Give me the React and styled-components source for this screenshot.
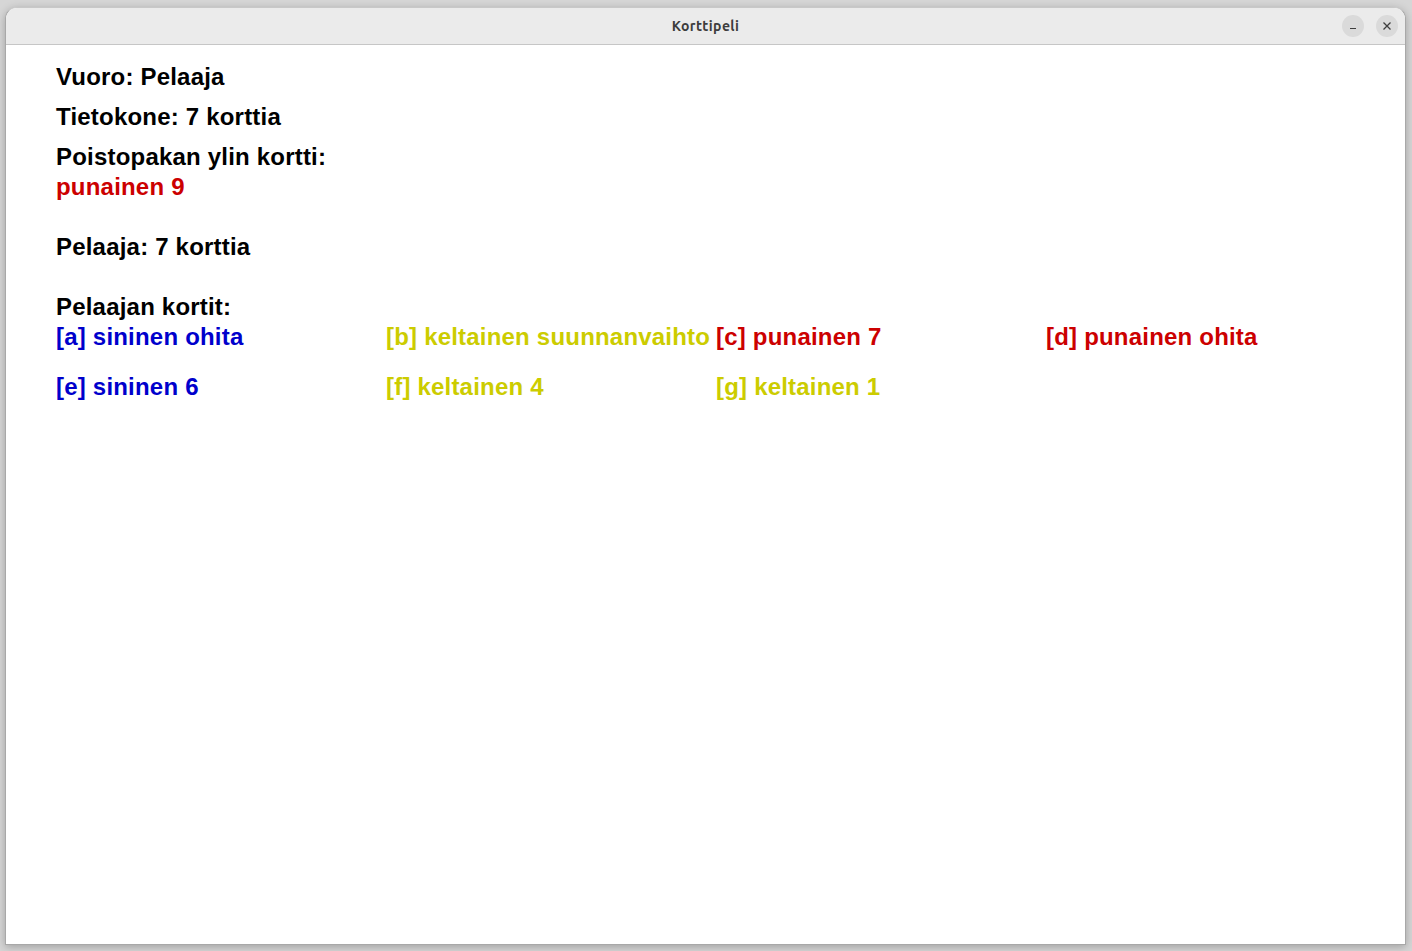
import React from "react";
import styled, { createGlobalStyle } from "styled-components";

const GlobalStyle = createGlobalStyle`
  html, body {
    margin: 0;
    padding: 0;
    background: #d6d6d6;
  }
  #root {
    height: 951px;
    padding: 7px 6px 6px 5px;
    box-sizing: border-box;
  }
`;

const Window = styled.div`
  height: 938px;
  display: flex;
  flex-direction: column;
  background: #ffffff;
  border: 1px solid #a8a8a8;
  border-top-color: #c8c8c8;
  border-radius: 12px 12px 0 0;
  box-shadow: 0 2px 8px rgba(0, 0, 0, 0.25);
  box-sizing: border-box;
  overflow: hidden;
`;

const TitleBar = styled.div`
  height: 36px;
  flex: none;
  display: grid;
  grid-template-columns: 1fr auto 1fr;
  align-items: center;
  background: #ebebeb;
  border-bottom: 1px solid #c6c6c6;
`;

const Title = styled.div`
  grid-column: 2;
  font-family: "Ubuntu", "Noto Sans", "DejaVu Sans", sans-serif;
  font-weight: 700;
  font-size: 14px;
  letter-spacing: 0.4px;
  color: #3d3d3d;
`;

const Controls = styled.div`
  grid-column: 3;
  justify-self: end;
  display: flex;
  gap: 12px;
  padding-right: 7px;
`;

const ControlButton = styled.div`
  width: 22px;
  height: 22px;
  border-radius: 50%;
  background: #dadada;
  display: flex;
  align-items: center;
  justify-content: center;
`;

const Content = styled.div`
  flex: 1;
  padding: 17px 50px 0 50px;
  font-family: "Liberation Sans", Arial, sans-serif;
  font-weight: 700;
  font-size: 24px;
  letter-spacing: 0.2px;
`;

const Line = styled.div`
  line-height: 30px;
  height: 30px;
  white-space: nowrap;
  color: ${({ $color }) => $color || "#000000"};
  margin-top: ${({ $gap }) => $gap || 0}px;
`;

const CardGrid = styled.div`
  display: grid;
  grid-template-columns: repeat(4, 330px);
  row-gap: 20px;
`;

const COLORS = {
  sininen: "#0000cc",
  keltainen: "#cccc00",
  punainen: "#cc0000",
};

const cards = [
  ["a", "sininen", "ohita"],
  ["b", "keltainen", "suunnanvaihto"],
  ["c", "punainen", "7"],
  ["d", "punainen", "ohita"],
  ["e", "sininen", "6"],
  ["f", "keltainen", "4"],
  ["g", "keltainen", "1"],
];

function App() {
  return (
    <>
      <GlobalStyle />
      <Window>
        <TitleBar>
          <Title>Korttipeli</Title>
          <Controls>
            <ControlButton>
              <svg width="10" height="10" viewBox="0 0 10 10">
                <path d="M2 7.5h6" stroke="#3d3d3d" strokeWidth="1.2" />
              </svg>
            </ControlButton>
            <ControlButton>
              <svg width="10" height="10" viewBox="0 0 10 10">
                <path d="M1.5 1.5l7 7M8.5 1.5l-7 7" stroke="#3d3d3d" strokeWidth="1.3" />
              </svg>
            </ControlButton>
          </Controls>
        </TitleBar>
        <Content>
          <Line>Vuoro: Pelaaja</Line>
          <Line $gap={10}>Tietokone: 7 korttia</Line>
          <Line $gap={10}>Poistopakan ylin kortti:</Line>
          <Line $color={COLORS.punainen}>punainen 9</Line>
          <Line $gap={30}>Pelaaja: 7 korttia</Line>
          <Line $gap={30}>Pelaajan kortit:</Line>
          <CardGrid>
            {cards.map(([key, color, value]) => (
              <Line key={key} $color={COLORS[color]}>
                [{key}] {color} {value}
              </Line>
            ))}
          </CardGrid>
        </Content>
      </Window>
    </>
  );
}

export default App;
